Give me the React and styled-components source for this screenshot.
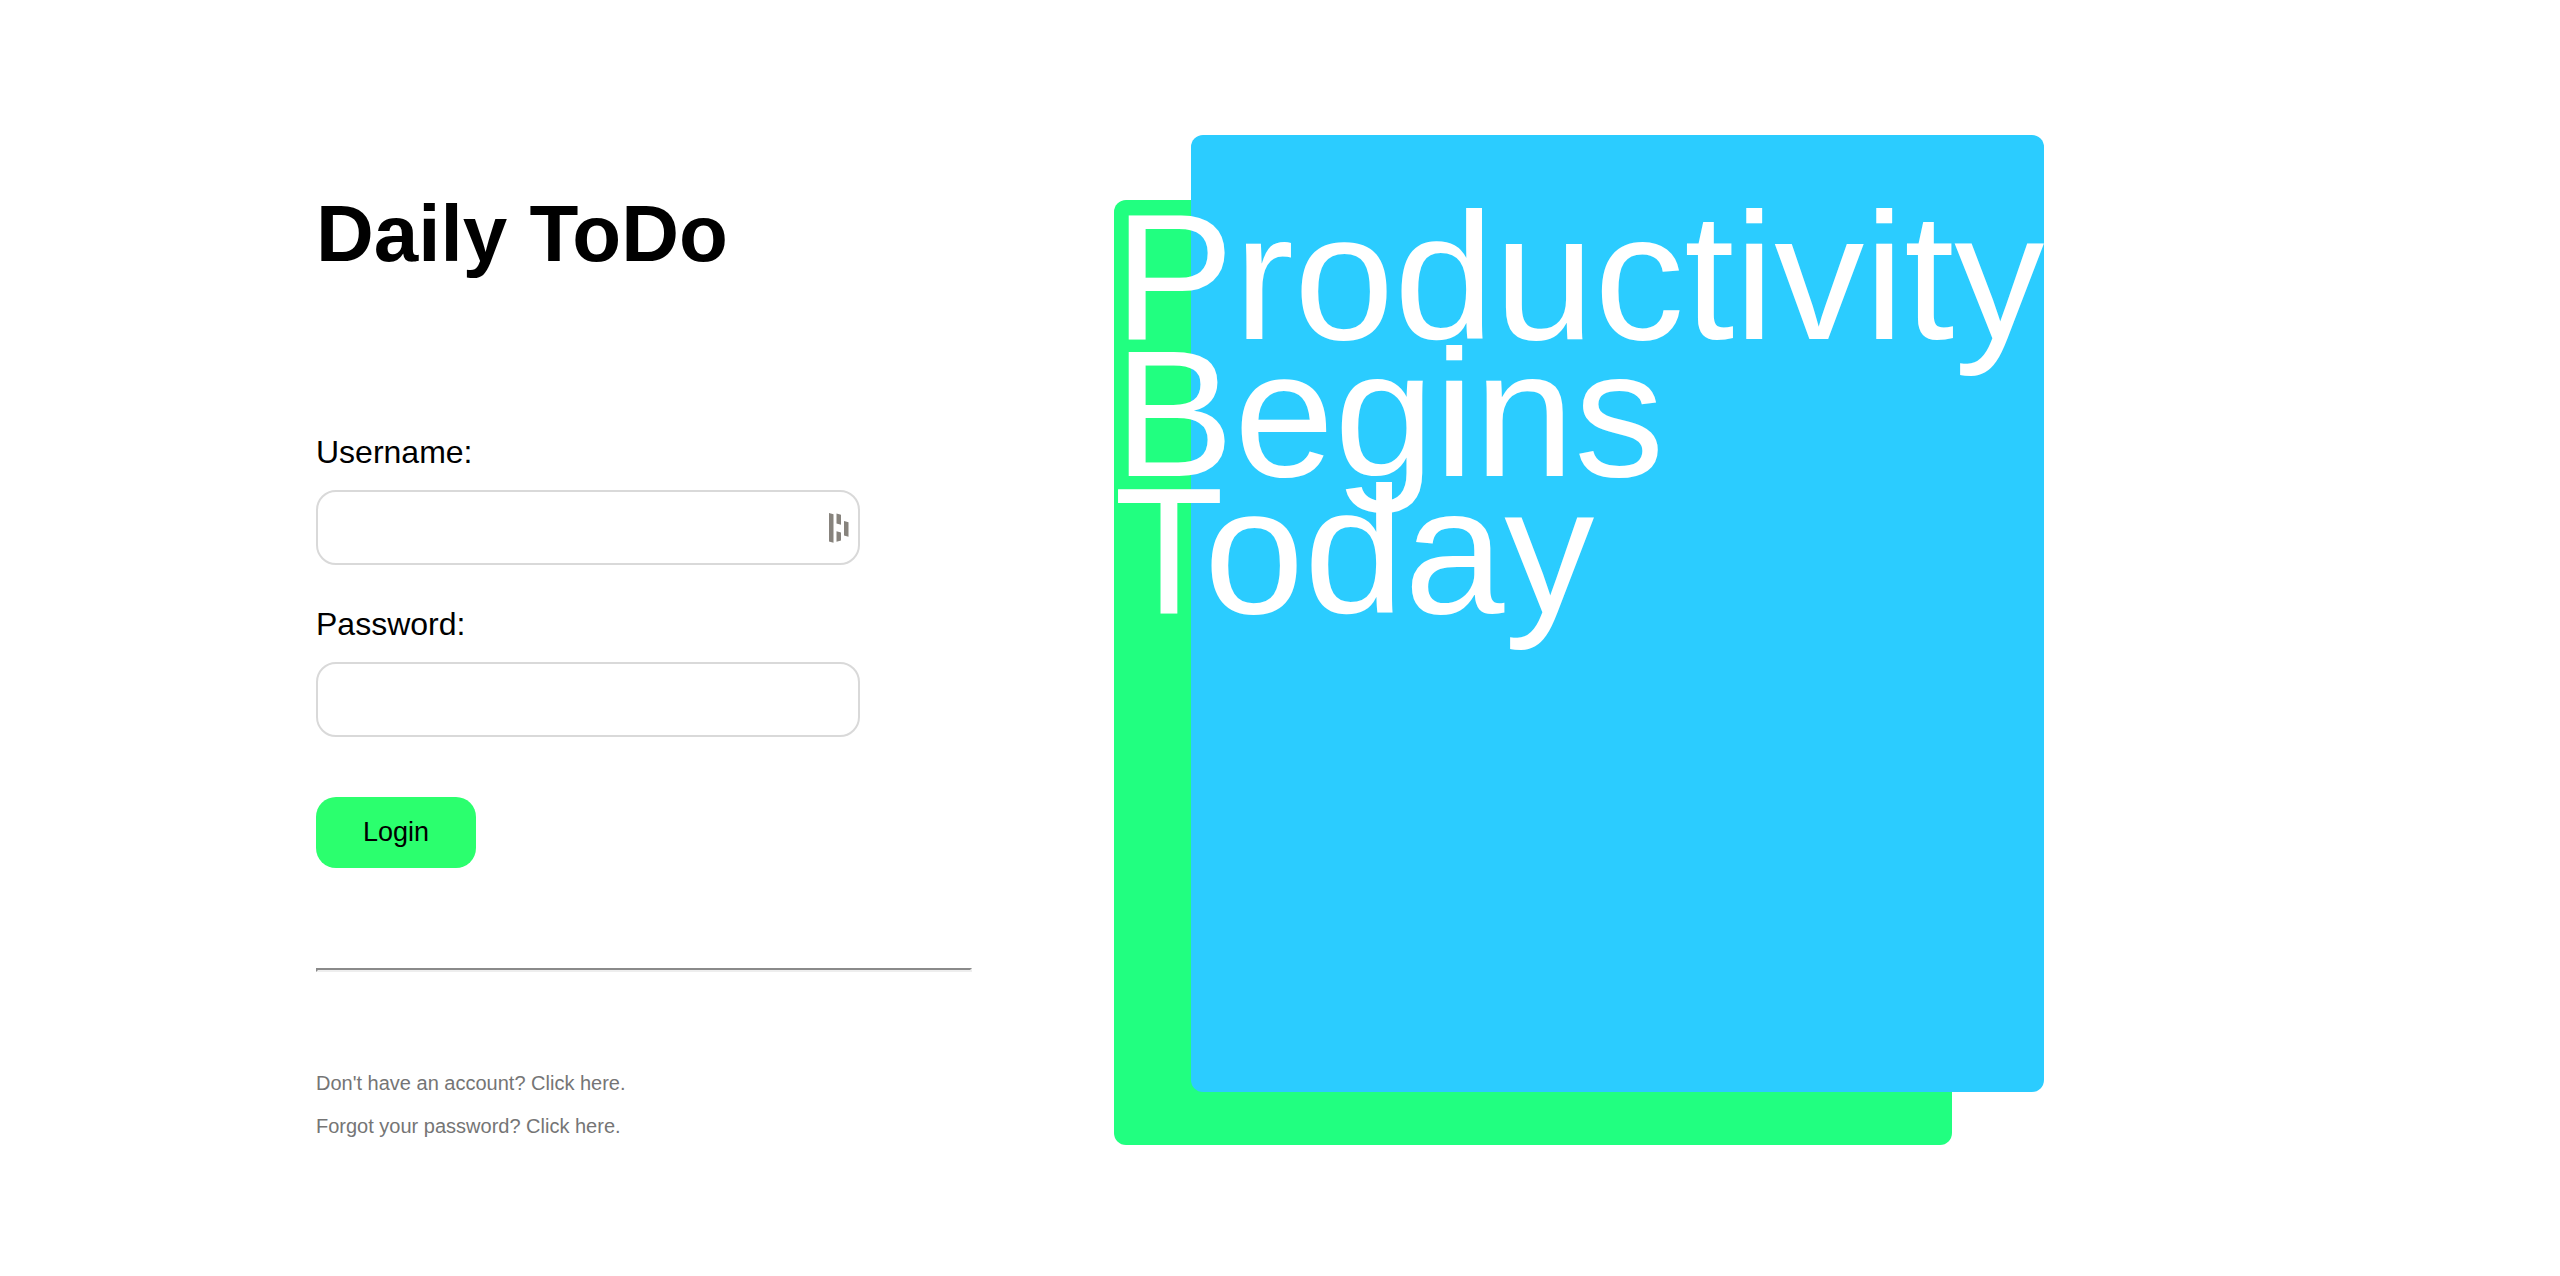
import React from "react";
import styled, { createGlobalStyle } from "styled-components";

const GlobalStyle = createGlobalStyle`
  *, *::before, *::after { box-sizing: border-box; }
  body {
    margin: 0;
    background: #ffffff;
    color: #000000;
    font-family: "Liberation Sans", Arial, Helvetica, sans-serif;
  }
`;

const Page = styled.main`
  display: flex;
  align-items: flex-start;
  gap: 142px;
  padding: 135px 316px 130px;
`;

const LoginPanel = styled.section`
  flex: 0 1 656px;
  min-width: 0;
  padding-top: 53px;
`;

const Title = styled.h1`
  margin: 0 0 154px;
  font-size: 80px;
  line-height: 92px;
  font-weight: 700;
`;

const LoginForm = styled.form`
  display: flex;
  flex-direction: column;
  align-items: flex-start;
`;

const Field = styled.div`
  display: flex;
  flex-direction: column;
  gap: 20px;
  width: 100%;
  max-width: 544px;
  margin-bottom: ${({ $last }) => ($last ? 60 : 41)}px;
`;

const Label = styled.label`
  font-size: 32px;
  line-height: 36px;
`;

const InputBox = styled.div`
  display: flex;
  align-items: center;
  height: 75px;
  padding-right: 9px;
  border: 2px solid #d9d9d9;
  border-radius: 20px;
  background: #ffffff;
`;

const TextInput = styled.input`
  flex: 1;
  min-width: 0;
  height: 100%;
  padding: 0 20px;
  border: 0;
  border-radius: 20px;
  outline: 0;
  background: transparent;
  font: inherit;
  font-size: 28px;
`;

const ManagerIcon = styled.svg`
  flex: none;
  width: 20px;
  height: 30px;
  fill: #87837d;
`;

const LoginButton = styled.button`
  width: 160px;
  height: 71px;
  padding: 0;
  border: 0;
  border-radius: 20px;
  background: #2bff6e;
  color: #000000;
  font: inherit;
  font-size: 27px;
  cursor: pointer;
`;

const Divider = styled.hr`
  height: 4px;
  margin: 100px 0;
  border: 2px solid;
  border-color: #8a8a8a #eeeeee #eeeeee #8a8a8a;
`;

const Links = styled.nav`
  display: flex;
  flex-direction: column;
  align-items: flex-start;
  gap: 20px;
`;

const HelpLink = styled.a`
  color: #757575;
  font-size: 20px;
  line-height: 23px;
  text-decoration: none;
`;

const Artwork = styled.section`
  flex: 0 0 930px;
  display: grid;
  grid-template-columns: 77px minmax(0, 1fr) 92px;
  grid-template-rows: 65px 892px 53px;
`;

const GreenCard = styled.div`
  grid-area: 2 / 1 / 4 / 3;
  border-radius: 12px;
  background: #21ff80;
`;

const BlueCard = styled.div`
  grid-area: 1 / 2 / 3 / 4;
  border-radius: 12px;
  background: #2bccff;
`;

const Slogan = styled.p`
  grid-area: 2 / 1 / 3 / 4;
  margin: 0;
  padding-top: 8px;
  color: #ffffff;
  font-size: 180px;
  line-height: 137px;
`;

export default function App() {
  return (
    <>
      <GlobalStyle />
      <Page>
        <LoginPanel>
          <Title>Daily ToDo</Title>
          <LoginForm onSubmit={(event) => event.preventDefault()}>
            <Field>
              <Label htmlFor="username">Username:</Label>
              <InputBox>
                <TextInput id="username" type="text" autoComplete="username" />
                <ManagerIcon viewBox="0 0 20 30" aria-hidden="true">
                  <path d="M0 0L4.5 1.2V29.8L0 28.6ZM7.5 .6L12 1.8V11.8L7.5 10.4ZM7.5 18.2L12 19.6V27.6L7.5 28.8ZM15 8L19.5 9.2V23.8L15 22.6Z" />
                </ManagerIcon>
              </InputBox>
            </Field>
            <Field $last>
              <Label htmlFor="password">Password:</Label>
              <InputBox>
                <TextInput id="password" type="password" autoComplete="current-password" />
              </InputBox>
            </Field>
            <LoginButton type="submit">Login</LoginButton>
          </LoginForm>
          <Divider />
          <Links>
            <HelpLink href="#register">Don't have an account? Click here.</HelpLink>
            <HelpLink href="#reset">Forgot your password? Click here.</HelpLink>
          </Links>
        </LoginPanel>
        <Artwork>
          <GreenCard />
          <BlueCard />
          <Slogan>
            Productivity
            <br />
            Begins
            <br />
            Today
          </Slogan>
        </Artwork>
      </Page>
    </>
  );
}
